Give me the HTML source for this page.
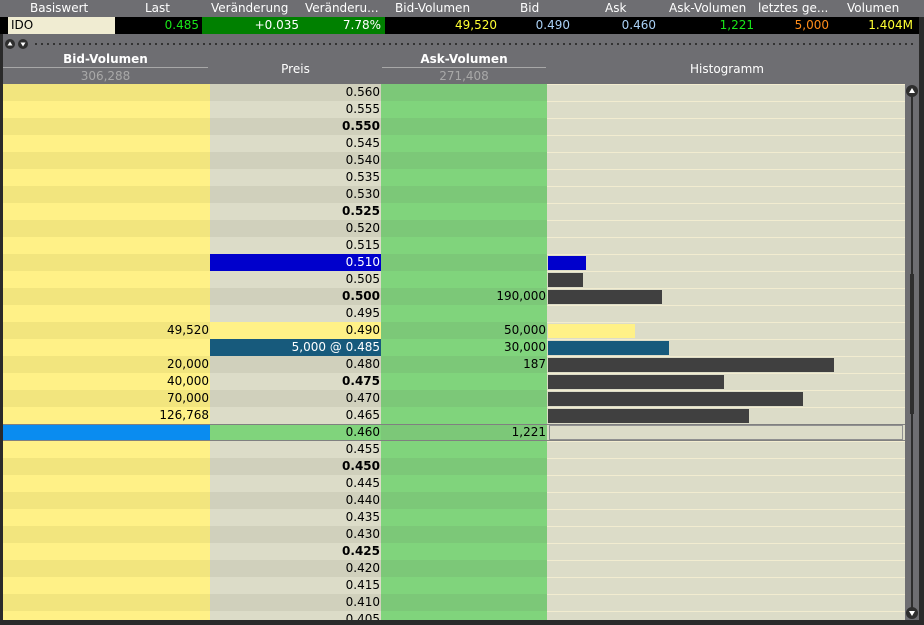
<!DOCTYPE html>
<html><head><meta charset="utf-8"><style>
*{margin:0;padding:0;box-sizing:border-box}
body{width:924px;height:625px;overflow:hidden;background:#2a2a2a;font-family:"DejaVu Sans","Liberation Sans",sans-serif;font-size:12px;position:relative}
.top{position:absolute;left:0;top:0;width:924px;height:17px;background:#6e6e72;color:#fff;font-size:12px}
.top span{position:absolute;top:1px;white-space:nowrap}
.data{position:absolute;left:0;top:17px;width:919px;height:17px;background:#000}
.data i{position:absolute;top:0;height:17px;line-height:17px;white-space:nowrap;font-style:normal}
.data u{position:absolute;top:0;height:17px;text-decoration:none}
.tb{position:absolute;left:3px;top:34px;width:916px;height:17px;background:#6e6e72}
.hdr{position:absolute;left:3px;top:51px;width:916px;height:33px;background:#6e6e72;color:#fff}
.body{position:absolute;left:3px;top:84px;width:902px;height:536px;overflow:hidden;background:#dcdcc8}
.r{display:flex;height:17px;line-height:17px}
.r>div{height:17px;text-align:right;padding-right:1px;white-space:nowrap;color:#000}
.b{width:207px;background:#fff187}
.p{width:171px;background:#dcdcc8}
.a{width:166px;background:#80d47c}
.h{width:358px;background:#dcdcc8;border-top:1px solid #f2ecd0;position:relative;padding:0!important}
.o .b{background:#f2e57e}.o .p{background:#d0d0bc}.o .a{background:#7cc878}
.bd{font-weight:bold}
.bar{position:absolute;left:1px;top:1px;height:14px;background:#404040}
.sb{position:absolute;left:905px;top:84px;width:14px;height:536px;background:#6e6e72}
</style></head><body>
<div class="top">
<span style="left:30px">Basiswert</span><span style="left:145px">Last</span><span style="left:211px">Veränderung</span><span style="left:305px">Veränderu...</span><span style="left:395px">Bid-Volumen</span><span style="left:520px">Bid</span><span style="left:605px">Ask</span><span style="left:669px">Ask-Volumen</span><span style="left:758px">letztes ge...</span><span style="left:847px">Volumen</span>
</div>
<div class="data">
<u style="left:8px;width:107px;background:#f0ecd2"></u>
<u style="left:202px;width:183px;background:#008000"></u>
<i style="left:11px;color:#000">IDO</i>
<i style="right:720px;color:#19e619">0.485</i>
<i style="right:620px;color:#fff">+0.035</i>
<i style="right:538px;color:#fff">7.78%</i>
<i style="right:422px;color:#ffff33">49,520</i>
<i style="right:349px;color:#a9d0f5">0.490</i>
<i style="right:263px;color:#a9d0f5">0.460</i>
<i style="right:165px;color:#19e619">1,221</i>
<i style="right:90px;color:#ff8c1a">5,000</i>
<i style="right:6px;color:#ffff33">1.404M</i>
</div>
<div class="tb">
<svg width="916" height="17" style="position:absolute;left:0;top:0">
<defs><pattern id="d" x="0" y="0" width="6" height="17" patternUnits="userSpaceOnUse"><rect x="2" y="9" width="2" height="2" fill="#333"/></pattern></defs>
<rect x="28" y="0" width="882" height="17" fill="url(#d)"/>
<circle cx="7" cy="10" r="5" fill="#2e2e2e"/><path d="M4.5 11.5h5l-2.5-4z" fill="#fff"/>
<circle cx="20" cy="10" r="5" fill="#2e2e2e"/><path d="M17.5 8.5h5l-2.5 4z" fill="#fff"/>
</svg>
</div>
<div class="hdr">
<div style="position:absolute;left:0;top:0;width:205px;height:17px;text-align:center;font-weight:bold;line-height:17px;border-bottom:1px solid #a8a8a8">Bid-Volumen</div>
<div style="position:absolute;left:0;top:17px;width:205px;height:16px;text-align:center;color:#a8a8a8;line-height:16px">306,288</div>
<div style="position:absolute;left:207px;top:0;width:171px;height:33px;text-align:center;line-height:36px">Preis</div>
<div style="position:absolute;left:379px;top:0;width:164px;height:17px;text-align:center;font-weight:bold;line-height:17px;border-bottom:1px solid #a8a8a8">Ask-Volumen</div>
<div style="position:absolute;left:379px;top:17px;width:164px;height:16px;text-align:center;color:#a8a8a8;line-height:16px">271,408</div>
<div style="position:absolute;left:545px;top:0;width:358px;height:33px;text-align:center;line-height:36px">Histogramm</div>
</div>
<div class="body">
<div class="r o"><div class="b"></div><div class="p">0.560</div><div class="a"></div><div class="h"></div></div>
<div class="r"><div class="b"></div><div class="p">0.555</div><div class="a"></div><div class="h"></div></div>
<div class="r o"><div class="b"></div><div class="p bd">0.550</div><div class="a"></div><div class="h"></div></div>
<div class="r"><div class="b"></div><div class="p">0.545</div><div class="a"></div><div class="h"></div></div>
<div class="r o"><div class="b"></div><div class="p">0.540</div><div class="a"></div><div class="h"></div></div>
<div class="r"><div class="b"></div><div class="p">0.535</div><div class="a"></div><div class="h"></div></div>
<div class="r o"><div class="b"></div><div class="p">0.530</div><div class="a"></div><div class="h"></div></div>
<div class="r"><div class="b"></div><div class="p bd">0.525</div><div class="a"></div><div class="h"></div></div>
<div class="r o"><div class="b"></div><div class="p">0.520</div><div class="a"></div><div class="h"></div></div>
<div class="r"><div class="b"></div><div class="p">0.515</div><div class="a"></div><div class="h"></div></div>
<div class="r o"><div class="b"></div><div class="p" style="background:#0000cc;color:#fff">0.510</div><div class="a"></div><div class="h"><div class="bar" style="width:38px;background:#0000cc"></div></div></div>
<div class="r"><div class="b"></div><div class="p">0.505</div><div class="a"></div><div class="h"><div class="bar" style="width:35px"></div></div></div>
<div class="r o"><div class="b"></div><div class="p bd">0.500</div><div class="a">190,000</div><div class="h"><div class="bar" style="width:114px"></div></div></div>
<div class="r"><div class="b"></div><div class="p">0.495</div><div class="a"></div><div class="h"></div></div>
<div class="r o"><div class="b">49,520</div><div class="p" style="background:#fff187">0.490</div><div class="a">50,000</div><div class="h"><div class="bar" style="width:87px;background:#fff187"></div></div></div>
<div class="r"><div class="b"></div><div class="p" style="background:#175a7c;color:#fff">5,000 @ 0.485</div><div class="a">30,000</div><div class="h"><div class="bar" style="width:121px;background:#175a7c"></div></div></div>
<div class="r o"><div class="b">20,000</div><div class="p">0.480</div><div class="a">187</div><div class="h"><div class="bar" style="width:286px"></div></div></div>
<div class="r"><div class="b">40,000</div><div class="p bd">0.475</div><div class="a"></div><div class="h"><div class="bar" style="width:176px"></div></div></div>
<div class="r o"><div class="b">70,000</div><div class="p">0.470</div><div class="a"></div><div class="h"><div class="bar" style="width:255px"></div></div></div>
<div class="r"><div class="b">126,768</div><div class="p">0.465</div><div class="a"></div><div class="h"><div class="bar" style="width:201px"></div></div></div>
<div class="r" style="border-top:1px solid #808080;border-bottom:1px solid #808080;height:17px;line-height:15px"><div class="b" style="background:#0a8cf0;height:15px"></div><div class="p" style="background:#80d47c;height:15px">0.460</div><div class="a" style="background:#7cc878;height:15px">1,221</div><div class="h" style="height:15px;border:1px solid #909090;margin-left:2px;width:354px"></div></div>
<div class="r"><div class="b"></div><div class="p">0.455</div><div class="a"></div><div class="h"></div></div>
<div class="r o"><div class="b"></div><div class="p bd">0.450</div><div class="a"></div><div class="h"></div></div>
<div class="r"><div class="b"></div><div class="p">0.445</div><div class="a"></div><div class="h"></div></div>
<div class="r o"><div class="b"></div><div class="p">0.440</div><div class="a"></div><div class="h"></div></div>
<div class="r"><div class="b"></div><div class="p">0.435</div><div class="a"></div><div class="h"></div></div>
<div class="r o"><div class="b"></div><div class="p">0.430</div><div class="a"></div><div class="h"></div></div>
<div class="r"><div class="b"></div><div class="p bd">0.425</div><div class="a"></div><div class="h"></div></div>
<div class="r o"><div class="b"></div><div class="p">0.420</div><div class="a"></div><div class="h"></div></div>
<div class="r"><div class="b"></div><div class="p">0.415</div><div class="a"></div><div class="h"></div></div>
<div class="r o"><div class="b"></div><div class="p">0.410</div><div class="a"></div><div class="h"></div></div>
<div class="r"><div class="b"></div><div class="p">0.405</div><div class="a"></div><div class="h"></div></div>
</div>
<div class="sb">
<svg width="14" height="536"><rect x="6" y="6" width="2" height="524" fill="#2e2e2e"/><rect x="5" y="190" width="4" height="140" fill="#2e2e2e"/>
<circle cx="7" cy="7" r="6" fill="#2e2e2e"/><path d="M4 9h6l-3-5z" fill="#fff"/>
<circle cx="7" cy="529" r="6" fill="#2e2e2e"/><path d="M4 527h6l-3 5z" fill="#fff"/></svg>
</div>
</body></html>
